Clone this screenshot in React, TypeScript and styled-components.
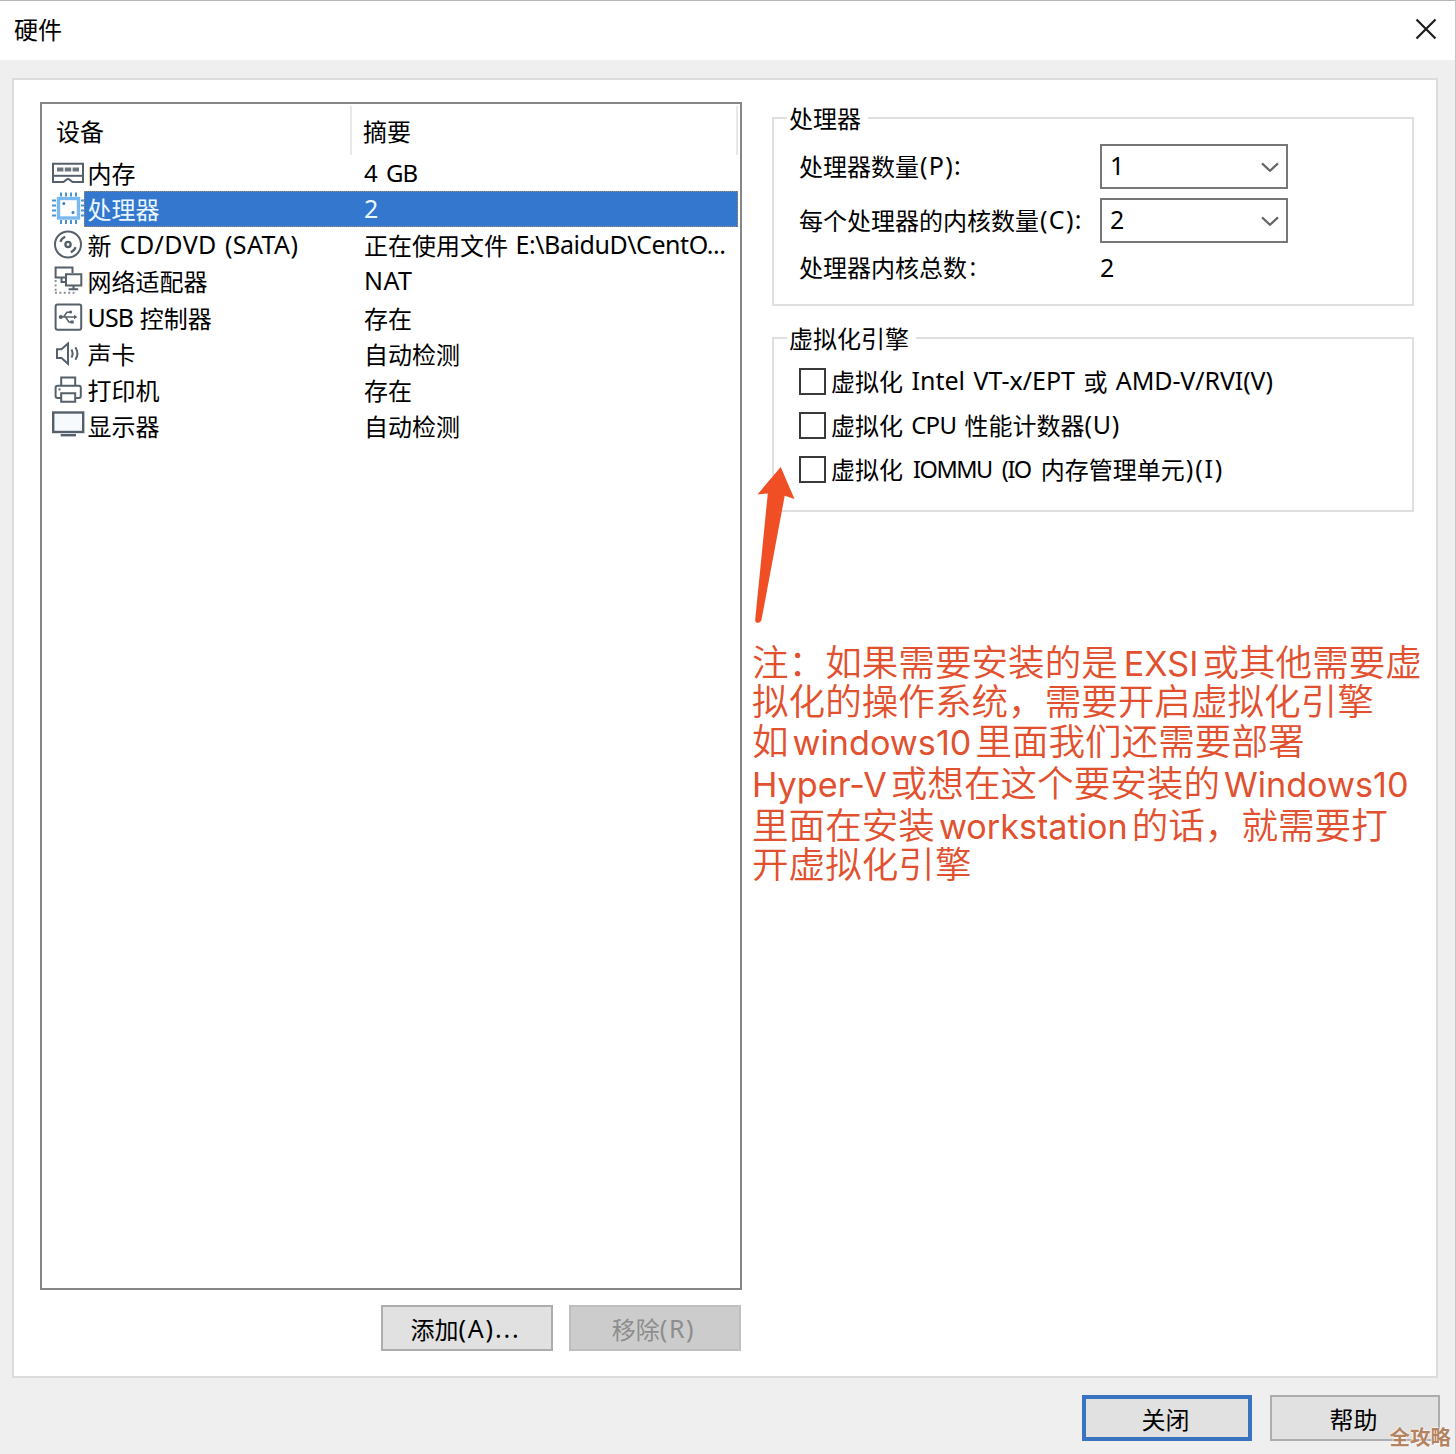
import React from "react";
import styled, { createGlobalStyle, css } from "styled-components";

const GlobalStyle = createGlobalStyle`
  *, *::before, *::after { box-sizing: border-box; }
  body { margin: 0; background: #f0f0f0; }
`;

const Dialog = styled.div`
  display: flex;
  flex-direction: column;
  width: 1456px;
  height: 1454px;
  overflow: hidden;
  background: #efefef;
  border-top: 1px solid #b4b8b9;
  border-right: 1px solid #c6c6c6;
  color: #000;
  font: 400 24px/36px "Noto Sans CJK SC", sans-serif;
  white-space: pre;
  position: relative;
`;

const Latin = styled.span<{ $track?: number; $word?: number; $pad?: number; $size?: number }>`
  font-family: "Noto Sans", sans-serif;
  font-size: ${(p) => p.$size ?? 25}px;
  line-height: 1;
  letter-spacing: ${(p) => p.$track ?? 0}px;
  word-spacing: ${(p) => p.$word ?? 0}px;
  margin-left: ${(p) => p.$pad ?? 0}px;
  position: relative;
  top: -1px;
`;

const TitleBar = styled.header`
  flex: none;
  display: flex;
  justify-content: space-between;
  align-items: center;
  height: 59px;
  padding: 0 17px 4px 14px;
  background: #fff;
`;

const Title = styled.h1`
  margin: 0;
  font: inherit;
`;

const CloseButton = styled.button`
  display: flex;
  padding: 0;
  border: 0;
  background: none;
`;

const Panel = styled.main`
  flex: none;
  display: flex;
  gap: 8px;
  width: 1426px;
  height: 1300px;
  margin: 18px 0 0 12px;
  padding: 22px 22px 0 26px;
  background: #fff;
  border: 2px solid #dcdcdc;
`;

const DeviceColumn = styled.section`
  flex: none;
  display: flex;
  flex-direction: column;
  width: 702px;
`;

const DeviceList = styled.div`
  height: 1188px;
  background: #fff;
  border: 2px solid #868686;
`;

const ListHeader = styled.div`
  display: flex;
  height: 51px;
  padding-top: 2px;
`;

const HeaderCell = styled.div<{ $width: number; $indent: number }>`
  width: ${(p) => p.$width}px;
  padding: 7px 0 0 ${(p) => p.$indent}px;
  border-right: 2px solid #e8e8e8;
`;

const DeviceRow = styled.div`
  display: flex;
  height: 36.15px;
  padding: 0 2px 0 10px;
`;

const IconCell = styled.span`
  flex: none;
  width: 32px;
  height: 36px;
  svg {
    display: block;
    overflow: visible;
  }
`;

const RowBody = styled.div<{ $selected?: boolean }>`
  flex: 1;
  display: flex;
  height: 36px;
  line-height: 36px;
  ${(p) =>
    p.$selected &&
    css`
      color: #e9f8ff;
      background: #3477cf;
      outline: 1px dotted #a08a68;
      outline-offset: -1px;
    `}
`;

const DeviceName = styled.span`
  flex: none;
  width: 280px;
  padding-left: 3.5px;
`;

const ListActions = styled.div`
  display: flex;
  justify-content: flex-end;
  gap: 16px;
  padding: 15px 1px 0 0;
`;

const PushButton = styled.button<{ $kind?: "default" | "disabled"; $width: number }>`
  display: flex;
  justify-content: center;
  align-items: center;
  width: ${(p) => p.$width}px;
  height: 46px;
  padding: 1px 3px 0 0;
  color: #000;
  background: #e1e1e1;
  border: 2px solid #adadad;
  font: inherit;
  ${(p) =>
    p.$kind === "default" &&
    css`
      border: 4px solid #3a73c0;
    `}
  ${(p) =>
    p.$kind === "disabled" &&
    css`
      color: #8d8d8d;
      background: #cccccc;
      border-color: #bfbfbf;
    `}
`;

const SettingsColumn = styled.section`
  flex: 1;
  min-width: 0;
  margin-top: -1px;
`;

const Group = styled.fieldset<{ $height: number; $gap?: number }>`
  width: 642px;
  height: ${(p) => p.$height}px;
  margin: ${(p) => p.$gap ?? 0}px 0 0 22px;
  padding: 0 0 0 25px;
  border: 2px solid #dfdfdf;
`;

const Legend = styled.legend`
  margin-left: -12px;
  padding: 0 7px 0 2px;
  line-height: 34px;
`;

const Field = styled.div<{ $height: number }>`
  display: flex;
  align-items: center;
  height: ${(p) => p.$height}px;
`;

const FieldLabel = styled.label`
  flex: none;
  width: 301px;
  padding-bottom: 2px;
`;

const Combo = styled.div`
  display: flex;
  justify-content: space-between;
  align-items: center;
  width: 188px;
  height: 45px;
  padding: 0 7px 0 8px;
  background: #fff;
  border: 2px solid #777;
`;

const CheckList = styled.div`
  padding-top: 4px;
`;

const CheckRow = styled.label`
  display: flex;
  align-items: center;
  gap: 5px;
  height: 44px;
`;

const CheckBox = styled.span`
  width: 27px;
  height: 27px;
  background: #fff;
  border: 2px solid #3a3a3a;
`;

const CheckText = styled.span`
  padding-bottom: 1px;
`;

const Note = styled.div`
  position: relative;
  margin-top: 129px;
  padding-left: 2px;
  color: #e2512f;
  font-size: 36.6px;
  font-weight: 350;
`;

const NoteLine = styled.div<{ $height: number }>`
  height: ${(p) => p.$height}px;
  line-height: ${(p) => p.$height}px;
`;

const NoteLatin = styled.span<{ $left?: number; $track?: number }>`
  font-family: Inter, sans-serif;
  font-size: 34.2px;
  font-weight: 400;
  line-height: 1;
  letter-spacing: ${(p) => p.$track ?? 0}px;
  margin: 0 4px 0 ${(p) => p.$left ?? 4}px;
`;

const Arrow = styled.svg`
  position: absolute;
  left: 0;
  top: -176px;
`;

const Footer = styled.footer`
  display: flex;
  justify-content: flex-end;
  gap: 18px;
  padding: 17px 15px 0 0;
`;

const Watermark = styled.span`
  position: absolute;
  right: 4px;
  bottom: 4px;
  color: #b5835f;
  font-size: 20.5px;
  font-weight: 700;
  line-height: 28px;
  text-shadow: 0 0 2px #fff, 0 0 2px #fff;
`;

const line = { fill: "none", stroke: "#56606a", strokeWidth: 2 };

const MemoryIcon = () => (
  <svg width="32" height="36" {...line}>
    <path d="M1 8.700h30v18.300h-10.500l-3-2.400-1.500-.8-1.500.8-3 2.400H1z" />
    <path d="M1 20.800h30" />
    <path d="M5 14.400h6.400M12.800 14.400h6.400M20.600 14.400h6.400" strokeWidth="4" stroke="#6d757d" />
  </svg>
);

const CpuIcon = () => (
  <svg width="32" height="36" fill="none" stroke="#4d92cf" strokeWidth="2">
    <path d="M9 1.500v4M14 1.500v4M19 1.500v4M24 1.500v4M9 29v4M14 29v4M19 29v4M24 29v4M0 9.500h4M0 14.500h4M0 19.500h4M0 24.500h4M29 9.500h4M29 14.500h4M29 19.500h4M29 24.500h4" />
    <rect x="6.500" y="7.500" width="20" height="19.500" fill="#fff" stroke="#79b9f0" strokeWidth="3.400" />
    <circle cx="11.800" cy="12.500" r="1.500" fill="#3a7fc0" stroke="none" />
    <circle cx="21" cy="21.500" r="1.500" fill="#3a7fc0" stroke="none" />
  </svg>
);

const DiscIcon = () => (
  <svg width="32" height="36" {...line}>
    <circle cx="16" cy="17.500" r="13" />
    <circle cx="16" cy="17.500" r="2.600" strokeWidth="2.400" />
    <path d="M8.400 14.800a8 8 0 0 1 4.800-5M23.600 20.200a8 8 0 0 1-4.800 5" strokeWidth="2.200" />
  </svg>
);

const NetworkIcon = () => (
  <svg width="32" height="36" {...line}>
    <path d="M13 14.500H3.600V4.600h16.900v5.400M9.500 14.500v4.600h4" />
    <path d="M14 11.200h15.300v11.200H14zM21.500 22.500v4M16.600 26.200h9.600" />
    <path d="M3.600 17v11M3 29.800h20" strokeDasharray="2 2.400" stroke="#8a9198" />
  </svg>
);

const UsbIcon = () => (
  <svg width="32" height="36" {...line}>
    <rect x="3.600" y="4.400" width="25.600" height="25.400" rx="2" />
    <path d="M8 17h15M11.500 17l3.400-4.800h3M13.500 17l3.400 5h2.600" strokeWidth="1.500" />
    <g fill="#56606a" stroke="none">
      <circle cx="8.800" cy="17" r="2" />
      <circle cx="18.600" cy="12" r="1.600" />
      <path d="M18.500 20.400h3.200v3.200h-3.200zM22 14.800l3.400 2.200-3.400 2.200z" />
    </g>
  </svg>
);

const SoundIcon = () => (
  <svg width="32" height="36" {...line}>
    <path d="M5 13.200h4.500l6.500-5.800v20.400l-6.500-5.800H5z" />
    <path d="M19.400 13.400q2.400 4.100 0 8.200M23.400 11.200q4 6.300 0 12.600" />
  </svg>
);

const PrinterIcon = () => (
  <svg width="32" height="36" {...line}>
    <path d="M9.200 13.800V5.600h14v8.200" />
    <path d="M9.200 26H5.600q-2 0-2-2v-8.200q0-2 2-2h21.200q2 0 2 2V24q0 2-2 2h-3.600" />
    <path d="M9.200 21.200h14v8.600h-14z" />
    <path d="M6.500 17.400h2" />
  </svg>
);

const MonitorIcon = () => (
  <svg width="32" height="36" {...line}>
    <rect x="1.200" y="4.500" width="30" height="19.500" fill="#f6fafc" strokeWidth="2.400" />
    <path d="M8.700 27.200h15.300" strokeWidth="2.400" />
  </svg>
);

const Chevron = () => (
  <svg width="18" height="12" fill="none" stroke="#666" strokeWidth="2.200">
    <path d="M1 2.400l8 7.400 8-7.400" />
  </svg>
);

type Device = { icon: React.ReactNode; name: React.ReactNode; summary: React.ReactNode; selected?: boolean };

const devices: Device[] = [
  { icon: <MemoryIcon />, name: "内存", summary: <Latin $size={24} $track={-1} $word={4}>4 GB</Latin> },
  { icon: <CpuIcon />, name: "处理器", summary: <Latin>2</Latin>, selected: true },
  { icon: <DiscIcon />, name: <>新<Latin $track={0.4} $word={1.3}> CD/DVD (SATA)</Latin></>, summary: <>正在使用文件<Latin $track={-0.45} $word={1.5}> E:\BaiduD\CentO...</Latin></> },
  { icon: <NetworkIcon />, name: "网络适配器", summary: <Latin $track={0.4}>NAT</Latin> },
  { icon: <UsbIcon />, name: <><Latin $track={-0.9} $word={1}>USB </Latin>控制器</>, summary: "存在" },
  { icon: <SoundIcon />, name: "声卡", summary: "自动检测" },
  { icon: <PrinterIcon />, name: "打印机", summary: "存在" },
  { icon: <MonitorIcon />, name: "显示器", summary: "自动检测" },
];

export default function App() {
  return (
    <>
      <GlobalStyle />
      <Dialog>
        <TitleBar>
          <Title>硬件</Title>
          <CloseButton aria-label="关闭窗口">
            <svg width="24" height="24" fill="none" stroke="#1c1c1c" strokeWidth="2.200">
              <path d="M2.500 2.500l19 19M21.500 2.500l-19 19" />
            </svg>
          </CloseButton>
        </TitleBar>
        <Panel>
          <DeviceColumn>
            <DeviceList>
              <ListHeader>
                <HeaderCell $width={310} $indent={14}>设备</HeaderCell>
                <HeaderCell $width={386} $indent={11}>摘要</HeaderCell>
              </ListHeader>
              {devices.map((d, i) => (
                <DeviceRow key={i}>
                  <IconCell>{d.icon}</IconCell>
                  <RowBody $selected={d.selected}>
                    <DeviceName>{d.name}</DeviceName>
                    <span>{d.summary}</span>
                  </RowBody>
                </DeviceRow>
              ))}
            </DeviceList>
            <ListActions>
              <PushButton $width={172}><span>添加<Latin $track={1.8}>(A)...</Latin></span></PushButton>
              <PushButton $width={172} $kind="disabled"><span>移除<Latin $track={1.6}>(R)</Latin></span></PushButton>
            </ListActions>
          </DeviceColumn>
          <SettingsColumn>
            <Group $height={205}>
              <Legend>处理器</Legend>
              <Field $height={63}>
                <FieldLabel>处理器数量<Latin $track={1.3} $pad={1}>(P):</Latin></FieldLabel>
                <Combo><Latin>1</Latin><Chevron /></Combo>
              </Field>
              <Field $height={45}>
                <FieldLabel>每个处理器的内核数量<Latin $track={1.3} $pad={1}>(C):</Latin></FieldLabel>
                <Combo><Latin>2</Latin><Chevron /></Combo>
              </Field>
              <Field $height={50}>
                <FieldLabel>处理器内核总数<Latin $pad={2.5}>:</Latin></FieldLabel>
                <Latin>2</Latin>
              </Field>
            </Group>
            <Group $height={191} $gap={15}>
              <Legend>虚拟化引擎</Legend>
              <CheckList>
                <CheckRow>
                  <CheckBox />
                  <CheckText>虚拟化<Latin $word={2}> Intel VT-x/EPT </Latin>或<Latin $track={-0.1} $word={2}> AMD-V/RVI(V)</Latin></CheckText>
                </CheckRow>
                <CheckRow>
                  <CheckBox />
                  <CheckText>虚拟化<Latin $size={24} $track={-0.7} $word={2.6}> CPU </Latin>性能计数器<Latin $track={0.8}>(U)</Latin></CheckText>
                </CheckRow>
                <CheckRow>
                  <CheckBox />
                  <CheckText>虚拟化<Latin $size={23.5} $track={-1.5} $word={5.5}> IOMMU (IO </Latin>内存管理单元<Latin $track={1.8} $pad={1}>)(I)</Latin></CheckText>
                </CheckRow>
              </CheckList>
            </Group>
            <Note>
              <Arrow width="50" height="160" viewBox="750 465 50 160">
                <path
                  fill="#f04f26"
                  d="M780.700 467l13.800 32-9.800-3.200-23.200 124q-.8 3-3.600 3-3 0-2.700-3.400l12.600-126-10.300 1z"
                />
              </Arrow>
              <NoteLine $height={39}>注：如果需要安装的是<NoteLatin $left={6}>EXSI</NoteLatin>或其他需要虚</NoteLine>
              <NoteLine $height={39}>拟化的操作系统，需要开启虚拟化引擎</NoteLine>
              <NoteLine $height={42}>如<NoteLatin>windows10</NoteLatin>里面我们还需要部署</NoteLine>
              <NoteLine $height={42}><NoteLatin $left={0}>Hyper-V</NoteLatin>或想在这个要安装的<NoteLatin>Windows10</NoteLatin></NoteLine>
              <NoteLine $height={41}>里面在安装<NoteLatin>workstation</NoteLatin>的话，就需要打</NoteLine>
              <NoteLine $height={38}>开虚拟化引擎</NoteLine>
            </Note>
          </SettingsColumn>
        </Panel>
        <Footer>
          <PushButton $width={170} $kind="default">关闭</PushButton>
          <PushButton $width={170}>帮助</PushButton>
        </Footer>
        <Watermark>全攻略</Watermark>
      </Dialog>
    </>
  );
}
